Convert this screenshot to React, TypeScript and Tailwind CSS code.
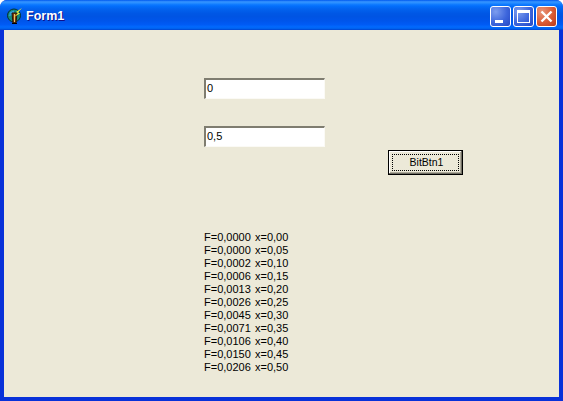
const lines = [
  ["F=0,0000", "x=0,00"],
  ["F=0,0000", "x=0,05"],
  ["F=0,0002", "x=0,10"],
  ["F=0,0006", "x=0,15"],
  ["F=0,0013", "x=0,20"],
  ["F=0,0026", "x=0,25"],
  ["F=0,0045", "x=0,30"],
  ["F=0,0071", "x=0,35"],
  ["F=0,0106", "x=0,40"],
  ["F=0,0150", "x=0,45"],
  ["F=0,0206", "x=0,50"],
];

function Edit({ value, className }: { value: string; className?: string }) {
  return (
    <div className={"w-[121px] h-[21px] bg-white border-t-2 border-l-2 border-t-[#7f7d70] border-l-[#7f7d70] border-r border-b border-r-[#fbfaf5] border-b-[#fbfaf5] pl-px text-[11px] leading-[16px] text-black " + (className ?? "")}>
      {value}
    </div>
  );
}

function App() {
  return (
    <div className="w-[563px] h-[401px] bg-white overflow-hidden [font-family:'Liberation_Sans',Arial,sans-serif]">
      <div className="w-full h-full flex flex-col rounded-t-[7px] overflow-hidden bg-[#0831d9]">
        <div className="h-[30px] shrink-0 flex items-center pt-[3px] pl-[6px] pr-[6px] bg-[linear-gradient(180deg,#0058ee_0%,#3593ff_6%,#288eff_10%,#127dff_14%,#036ffc_20%,#0262ee_30%,#0057e5_45%,#0054e3_55%,#0055eb_70%,#005bf5_82%,#026afe_90%,#0062ef_95%,#0043cf_100%)]">
          <svg width="17" height="17" viewBox="0 0 17 17" className="shrink-0">
            <circle cx="8" cy="7.5" r="6.5" fill="#138a7c" stroke="#06302c" strokeWidth="1" />
            <path d="M4 4 L8 2.5 L8 7 L3 8 Z" fill="#2f9fd8" />
            <path d="M6 5 H11 L10 15 H7 Z" fill="#7a3b10" stroke="#2b1505" strokeWidth="1" />
            <path d="M8 6 H9 V14 H8 Z" fill="#e9c66a" />
            <path d="M6 15 H11 V16 H6 Z" fill="#000" />
            <path d="M16 0 L10 4 L12 5 L8 9 L14 5.5 L12 4.5 Z" fill="#f5f03a" />
          </svg>
          <span className="ml-[3px] text-[12.5px] font-bold text-white [text-shadow:1px_1px_#0f1089] leading-none">Form1</span>
          <div className="ml-auto flex gap-[2px]">
            <div className="w-[21px] h-[21px] rounded-[3px] border border-white bg-[radial-gradient(circle_at_25%_25%,#7d9dee_0%,#3d66dc_55%,#2447c4_100%)] flex items-end">
              <div className="ml-[4px] mb-[3px] w-[8px] h-[3px] bg-white" />
            </div>
            <div className="w-[21px] h-[21px] rounded-[3px] border border-white bg-[radial-gradient(circle_at_25%_25%,#7d9dee_0%,#3d66dc_55%,#2447c4_100%)] flex items-center justify-center">
              <div className="w-[13px] h-[13px] border border-white border-t-[3px]" />
            </div>
            <div className="w-[21px] h-[21px] rounded-[3px] border border-white bg-[radial-gradient(circle_at_25%_25%,#e8957a_0%,#d95b35_55%,#b9391a_100%)] flex items-center justify-center">
              <svg width="13" height="13" viewBox="0 0 13 13">
                <path d="M1.5 1.5 L11.5 11.5 M11.5 1.5 L1.5 11.5" stroke="#fff" strokeWidth="2.4" />
              </svg>
            </div>
          </div>
        </div>
        <div className="flex-1 mx-[4px] mb-[4px] bg-[#ece9d8] flex">
          <div className="ml-[200px] pt-[48px] flex flex-col w-[184px] shrink-0">
            <Edit value="0" />
            <Edit value="0,5" className="mt-[27px]" />
            <div className="mt-[84px] text-[11px] leading-[13px] text-black">
              {lines.map(([f, x]) => (
                <div key={x} className="flex whitespace-pre">
                  <span className="w-[51px] shrink-0">{f}</span>
                  <span>{x}</span>
                </div>
              ))}
            </div>
          </div>
          <div className="mt-[120px] w-[75px] h-[25px] border border-black bg-[#ece9d8] shadow-[inset_-1px_-1px_#716f64,inset_1px_1px_#fff,inset_-2px_-2px_#aca899] p-[3px]">
            <div className="w-full h-full border border-dotted border-black flex items-center justify-center text-[10.5px] leading-none text-black pl-[2px]">BitBtn1</div>
          </div>
        </div>
      </div>
    </div>
  );
}

export default App;
